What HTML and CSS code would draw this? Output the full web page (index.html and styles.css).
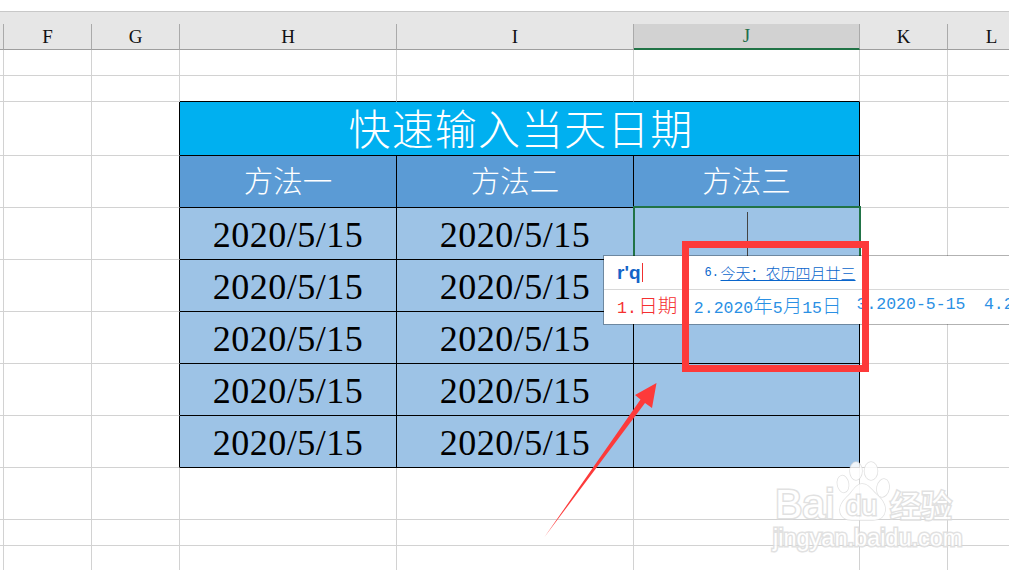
FILE: index.html
```html
<!DOCTYPE html>
<html lang="zh-CN">
<head>
<meta charset="utf-8">
<title>快速输入当天日期</title>
<link rel="stylesheet" href="styles.css">
</head>
<body>
<main class="stage">
  <table class="sheet">
    <colgroup>
      <col class="c-a"><col class="c-f"><col class="c-g"><col class="c-h"><col class="c-i"><col class="c-j"><col class="c-k"><col class="c-l">
    </colgroup>
    <thead>
      <tr class="r-band"><th colspan="8"></th></tr>
      <tr class="r-head">
        <th></th><th>F</th><th>G</th><th>H</th><th>I</th><th class="sel">J</th><th>K</th><th>L</th>
      </tr>
    </thead>
    <tbody>
      <tr class="r-26"><td></td><td></td><td></td><td></td><td></td><td></td><td></td><td></td></tr>
      <tr class="r-26"><td></td><td></td><td></td><td class="kb"></td><td class="kb"></td><td class="kb"></td><td></td><td></td></tr>
      <tr class="r-54"><td></td><td></td><td class="kr"></td><td class="title" colspan="3">快速输入当天日期</td><td></td><td></td></tr>
      <tr class="r-52"><td></td><td></td><td class="kr"></td><td class="sub">方法一</td><td class="sub">方法二</td><td class="sub">方法三</td><td></td><td></td></tr>
      <tr class="r-52"><td></td><td></td><td class="kr"></td><td class="date">2020/5/15</td><td class="date">2020/5/15</td><td class="date"></td><td></td><td></td></tr>
      <tr class="r-52"><td></td><td></td><td class="kr"></td><td class="date">2020/5/15</td><td class="date">2020/5/15</td><td class="date"></td><td></td><td></td></tr>
      <tr class="r-52"><td></td><td></td><td class="kr"></td><td class="date">2020/5/15</td><td class="date">2020/5/15</td><td class="date"></td><td></td><td></td></tr>
      <tr class="r-52"><td></td><td></td><td class="kr"></td><td class="date">2020/5/15</td><td class="date">2020/5/15</td><td class="date"></td><td></td><td></td></tr>
      <tr class="r-52"><td></td><td></td><td class="kr"></td><td class="date">2020/5/15</td><td class="date">2020/5/15</td><td class="date"></td><td></td><td></td></tr>
      <tr class="r-52"><td></td><td></td><td></td><td></td><td></td><td></td><td></td><td></td></tr>
      <tr class="r-26"><td></td><td></td><td></td><td></td><td></td><td></td><td></td><td></td></tr>
      <tr class="r-26"><td></td><td></td><td></td><td></td><td></td><td></td><td></td><td></td></tr>
    </tbody>
  </table>

  <div class="selection"></div>
  <div class="cursor"></div>

  <div class="ime">
    <div class="ime-top">
      <span class="ime-input">r'q</span><span class="ime-caret"></span>
      <span class="ime-hint"><span class="ime-hint-n">6.</span><span class="ime-hint-t">今天：农历四月廿三</span></span>
    </div>
    <div class="ime-list">
      <span class="cand first">1.<span class="cn gap">日期</span></span>
      <span class="cand second">2.2020<span class="cn">年</span>5<span class="cn">月</span>15<span class="cn">日</span></span>
      <span class="cand third">3.2020-5-15</span>
      <span class="cand">4.2020/5/15</span>
    </div>
  </div>

  <div class="redbox"></div>
  <svg class="arrow" width="1009" height="570" viewBox="0 0 1009 570" aria-hidden="true">
    <polygon points="656.5,383 635,395 640.5,399.5 544.5,537 645,403 652,408" fill="#fd3a3a"/>
  </svg>

  <div class="mark">
    <svg class="paw" width="56" height="62" viewBox="0 0 56 62" aria-hidden="true">
      <g fill="#fff" stroke="#dcdcdc" stroke-width="1.5">
        <ellipse cx="8" cy="24" rx="5.5" ry="8.5" transform="rotate(-10 8 24)"/>
        <ellipse cx="21" cy="11" rx="6" ry="9"/>
        <ellipse cx="36" cy="11" rx="6.5" ry="9"/>
        <ellipse cx="48" cy="28" rx="6" ry="9" transform="rotate(12 48 28)"/>
        <path d="M27 24c6 0 9 5 14 10 7 6 10 12 9 17-1 7-7 9-12 9H17c-6 0-12-3-12-10 0-6 4-10 9-15 4-4 7-11 13-11z"/>
      </g>
    </svg>
    <span class="mark-bai">Bai</span>
    <span class="mark-du">du</span>
    <span class="mark-cn">经验</span>
    <span class="mark-url">jingyan.baidu.com</span>
  </div>
</main>
</body>
</html>
```
FILE: styles.css
```css
html, body {
  margin: 0;
  padding: 0;
  background: #fff;
}
.stage {
  position: relative;
  width: 1009px;
  height: 570px;
  overflow: hidden;
  padding-top: 11px;
  box-sizing: border-box;
}
.sheet {
  table-layout: fixed;
  width: 1036px;
  border-collapse: separate;
  border-spacing: 0;
}
.c-a { width: 4px; }
.c-f { width: 88px; }
.c-g { width: 88px; }
.c-h { width: 217px; }
.c-i { width: 237px; }
.c-j { width: 226px; }
.c-k { width: 88px; }
.c-l { width: 88px; }

th, td {
  box-sizing: border-box;
  padding: 0;
  text-align: center;
  font-weight: normal;
  border-right: 1px solid #d2d2d2;
  border-bottom: 1px solid #d2d2d2;
  font-family: "Liberation Serif", "Noto Sans CJK SC", serif;
}
.r-band th {
  height: 13px;
  background: #e6e6e6;
  border-top: 1px solid #c8c8c8;
  border-right: 0;
  border-bottom: 0;
}
.r-head th {
  height: 26px;
  background: #e6e6e6;
  border-right: 1px solid #aaa;
  border-bottom: 1px solid #9e9e9e;
  font-size: 19px;
  line-height: 25px;
  color: #111;
}
.r-head th.sel {
  background: #d2d2d2;
  color: #1f6f4a;
  border-bottom: 2px solid #217346;
  line-height: 24px;
}
.r-26 td { height: 26px; }
.r-54 td { height: 54px; }
.r-52 td { height: 52px; }

td.kb { border-bottom-color: #000; }
td.kr { border-right-color: #000; }
td.title, td.sub, td.date {
  border-right-color: #000;
  border-bottom-color: #000;
}
td.title {
  background: #00b0f0;
  color: #fff;
  font-family: "Noto Sans CJK SC", sans-serif;
  font-weight: 300;
  font-size: 42px;
  line-height: 49px;
  letter-spacing: 1.1px;
  padding-bottom: 4px;
  padding-left: 3px;
}
td.sub {
  background: #5b9bd5;
  color: #fff;
  font-family: "Noto Sans CJK SC", sans-serif;
  font-weight: 300;
  font-size: 29.5px;
  line-height: 47px;
  padding-bottom: 4px;
}
td.date {
  background: #9dc3e6;
  color: #000;
  font-size: 36px;
  letter-spacing: 0.5px;
  line-height: 47px;
  padding-top: 4px;
}

.selection {
  position: absolute;
  left: 633px;
  top: 206px;
  width: 228px;
  height: 54px;
  box-sizing: border-box;
  border: 2px solid #217346;
}
.cursor {
  position: absolute;
  left: 747px;
  top: 212px;
  width: 1px;
  height: 44px;
  background: #444;
}

.ime {
  position: absolute;
  left: 603px;
  top: 255px;
  width: 430px;
  height: 70px;
  box-sizing: border-box;
  background: #fff;
  background-clip: padding-box;
  border: 1px solid rgba(0, 0, 0, 0.3);
  font-family: "Liberation Mono", "Noto Sans CJK SC", monospace;
}
.ime-top {
  display: flex;
  align-items: center;
  height: 33px;
  padding-left: 13px;
  border-bottom: 1px solid #d8d8d8;
}
.ime-input {
  font-family: "Liberation Sans", sans-serif;
  font-weight: bold;
  font-size: 19px;
  color: #1464c8;
}
.ime-caret {
  width: 1px;
  height: 19px;
  margin-left: 1px;
  background: #f03030;
}
.ime-hint {
  display: flex;
  align-items: center;
  margin-left: 62px;
  color: #0a66cc;
  font-family: "Noto Sans CJK TC", sans-serif;
}
.ime-hint-n {
  font-size: 12px;
  width: 16px;
  font-family: "Liberation Mono", monospace;
}
.ime-hint-t {
  font-size: 15px;
  line-height: 20px;
  font-weight: 300;
  text-decoration: underline;
}
.ime-list {
  display: flex;
  align-items: center;
  gap: 16.5px;
  height: 28px;
  padding-left: 13px;
  font-size: 16.5px;
  color: #2a90e4;
  white-space: nowrap;
}
.cand.first { color: #f53030; }
.cand.second { margin-right: -1.5px; }
.cand.third { margin-right: 2px; }
.cn {
  font-family: "Noto Sans CJK SC", sans-serif;
  font-weight: 300;
  font-size: 19.5px;
}
.cn.gap { margin-left: 1.5px; }

.redbox {
  position: absolute;
  left: 682px;
  top: 241px;
  width: 187px;
  height: 131px;
  box-sizing: border-box;
  border: 7.5px solid #fd3a3a;
}
.arrow {
  position: absolute;
  left: 0;
  top: 0;
}

.mark {
  position: absolute;
  left: 770px;
  top: 460px;
  width: 195px;
  height: 95px;
  color: #fff;
  opacity: 0.85;
  font-family: "Liberation Sans", sans-serif;
  -webkit-text-stroke: 3px #dcdcdc;
  paint-order: stroke fill;
}
.paw { position: absolute; left: 65px; top: 0; }
.mark-bai {
  position: absolute;
  left: 5px;
  top: 21px;
  font-size: 41px;
  line-height: 46px;
}
.mark-du {
  position: absolute;
  left: 76px;
  top: 30px;
  font-size: 28px;
  line-height: 32px;
}
.mark-cn {
  position: absolute;
  left: 120px;
  top: 24px;
  font-size: 31px;
  line-height: 40px;
  font-family: "Noto Sans CJK SC", sans-serif;
}
.mark-url {
  position: absolute;
  left: 3px;
  top: 65px;
  font-size: 23.5px;
  line-height: 26px;
}
```
